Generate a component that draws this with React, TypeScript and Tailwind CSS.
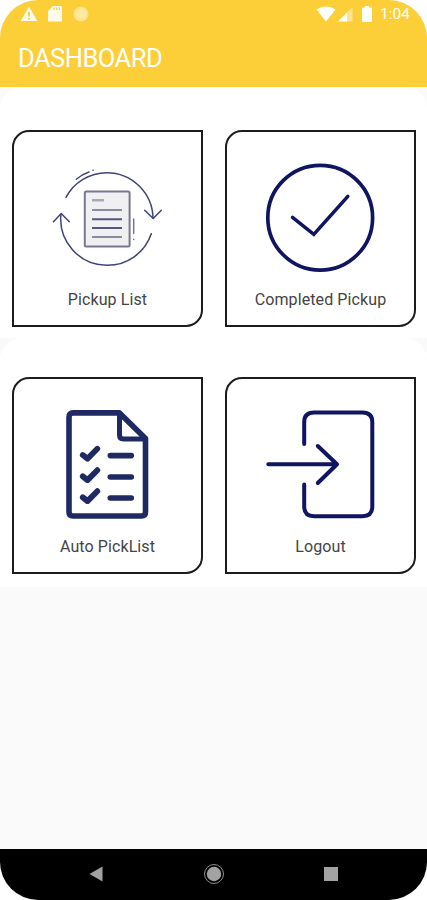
import type { ReactNode } from "react";

const NAVY = "#0f1560";

function PickupIcon() {
  return (
    <svg className="h-[111px] w-[111px]" viewBox="0 0 111 111" fill="none" stroke="#3f4379" strokeWidth="1.5" strokeLinecap="round" strokeLinejoin="round">
      <path d="M14 35.3A46.3 46.3 0 0 1 54.7 10.700A46.300 46.300 0 0 1 101 56.300" />
      <path d="M9 52A46.300 46.300 0 0 0 54.700 103.300A46.300 46.300 0 0 0 99.300 71.700" />
      <path d="M1.500 59.700L9.200 51.500L17.300 59.700M92.700 48.200L101.200 56.500L109.300 48.200" />
      <path d="M24.300 17.300Q30 12.300 37 10M41 8.300h.1" />
      <g stroke="#77788f">
        <rect x="32.800" y="29.400" width="44.800" height="55.200" rx="1.500" fill="#f0f0f2" strokeWidth="2" />
        <path d="M40 38.300H52" strokeWidth="2.600" stroke="#a9a9b5" strokeLinecap="butt" />
        <path d="M40 48H70M40 75H70" strokeWidth="2" stroke="#8b8b9a" strokeLinecap="butt" />
        <path d="M40 57.300H70M40 66H70" strokeWidth="2" stroke="#55577f" strokeLinecap="butt" />
        <path d="M81.700 57V71.500M81.700 77.200v.3" />
      </g>
    </svg>
  );
}

function CompletedIcon() {
  return (
    <svg className="h-[111px] w-[111px]" viewBox="0 0 111 111" fill="none" stroke={NAVY} strokeLinecap="round">
      <circle cx="55.2" cy="55.7" r="52.4" strokeWidth="3.7" />
      <path d="M27.5 55.3L48.8 72.4L82.8 34.3" strokeWidth="3.5" />
    </svg>
  );
}

function AutoPickIcon() {
  return (
    <svg className="h-[111px] w-[111px]" viewBox="0 0 111 111" fill="none" stroke="#202a62" strokeWidth="5.6" strokeLinecap="round" strokeLinejoin="round">
      <path d="M67.5 3.9H21Q17 3.9 17 8V103Q17 107 21 107H89.5Q93.5 107 93.5 103V29.5Z" />
      <path d="M67.5 4.5V26Q67.5 30 71.5 30H92.5" strokeWidth="5" />
      {[0, 21.4, 42.4].map((y) => (
        <g key={y} transform={`translate(0 ${y})`}>
          <path d="M30.8 46L35.5 49.7L45.3 39.8" strokeWidth="5.8" />
          <path d="M58.3 46.6H79.3" />
        </g>
      ))}
    </svg>
  );
}

function LogoutIcon() {
  return (
    <svg className="h-[111px] w-[111px]" viewBox="0 0 111 111" fill="none" stroke={NAVY} strokeWidth="4" strokeLinecap="round" strokeLinejoin="round">
      <path d="M39.2 35V13Q39.2 3.4 49 3.4H97.5Q107.3 3.4 107.3 13V97.5Q107.3 107.2 97.5 107.2H49Q39.2 107.2 39.2 97.5V75.5" />
      <path d="M3.3 55.3H72M52.8 37L72 55.3L52.8 74" />
    </svg>
  );
}

function Tile({ label, children }: { label: string; children: ReactNode }) {
  return (
    <button className="flex h-[197px] w-[191px] flex-col items-center rounded-tl-[17px] rounded-br-[17px] border-2 border-[#1c1c1c] bg-white pt-[30px]">
      {children}
      <span className="mt-[15px] text-[16px] leading-6 tracking-[0.1px] whitespace-nowrap text-[#444]">{label}</span>
    </button>
  );
}

export default function App() {
  return (
    <div className="h-[900px] w-[427px] bg-white font-['Roboto',sans-serif]">
      <div className="flex h-full flex-col overflow-hidden rounded-[38px] bg-[#fafafa]">
        <header className="h-[87px] shrink-0 bg-[#fccf38] text-white">
          <div className="flex h-7 items-center justify-between pr-[17px] pl-5">
            <div className="flex items-center">
              <svg className="h-4 w-[18px]" viewBox="0 0 18 16">
                <path d="M9 .5L17.3 15H.7Z" fill="#fffbea" />
                <path d="M9 6V10.5M9 12v1.5" stroke="#e8c044" strokeWidth="1.6" />
              </svg>
              <svg className="ml-[10px] h-4 w-[14px]" viewBox="0 0 14 16">
                <path d="M5 0H13Q14 0 14 1V14.5Q14 15.5 13 15.5H1Q0 15.5 0 14.5V5Z" fill="#fffbea" />
                <path d="M6 1.5V4M8.7 1.5V4M11.4 1.5V4" stroke="#eecb5c" strokeWidth="1.2" />
              </svg>
              <svg className="ml-[11px] h-4 w-4" viewBox="0 0 16 16">
                <circle cx="8" cy="8" r="7.5" fill="#fde28a" />
                <circle cx="8.5" cy="7.5" r="5.2" fill="#fee9a3" />
              </svg>
            </div>
            <div className="flex items-center">
              <svg className="h-4 w-[20px]" viewBox="0 0 20 16">
                <path d="M.5 3.5Q10-2.5 19.5 3.5L10 15.5Z" fill="#fff" />
              </svg>
              <svg className="ml-[2px] h-4 w-[15px]" viewBox="0 0 15 16">
                <path d="M14.5 1V15.5H0Z" fill="#fde391" />
                <path d="M9 6.5V15.5H0Z" fill="#fff" />
              </svg>
              <svg className="ml-[9px] h-4 w-[10px]" viewBox="0 0 10 16">
                <path d="M3 0H7V1.5H9Q10 1.5 10 2.5V15Q10 16 9 16H1Q0 16 0 15V2.5Q0 1.5 1 1.5H3Z" fill="#fff" />
              </svg>
              <span className="ml-[8px] text-[15.5px] leading-5">1:04</span>
            </div>
          </div>
          <h1 className="mt-[14px] pl-[18px] text-[25.5px] leading-8 tracking-[-0.5px]">DASHBOARD</h1>
        </header>

        <main className="flex-1">
          <section className="flex h-[251px] gap-[22px] rounded-t-[22px] bg-white pt-[43px] pl-3">
            <Tile label="Pickup List"><PickupIcon /></Tile>
            <Tile label="Completed Pickup"><CompletedIcon /></Tile>
          </section>
          <section className="flex h-[249px] gap-[22px] rounded-t-[22px] bg-white pt-[39px] pl-3">
            <Tile label="Auto PickList"><AutoPickIcon /></Tile>
            <Tile label="Logout"><LogoutIcon /></Tile>
          </section>
        </main>

        <nav className="flex h-[51.5px] shrink-0 items-center bg-black">
          <svg className="ml-[89px] h-4 w-[14px]" viewBox="0 0 14 16">
            <path d="M13.5 .5V15.5L.5 8Z" fill="#a2a2a2" />
          </svg>
          <svg className="ml-[100px] h-[22px] w-[22px]" viewBox="0 0 22 22">
            <circle cx="11" cy="11" r="9.5" fill="none" stroke="#8d8d8d" />
            <circle cx="11" cy="11" r="7.2" fill="#a2a2a2" />
          </svg>
          <div className="ml-[99px] h-[14px] w-[14px] bg-[#a2a2a2]" />
        </nav>
      </div>
    </div>
  );
}
